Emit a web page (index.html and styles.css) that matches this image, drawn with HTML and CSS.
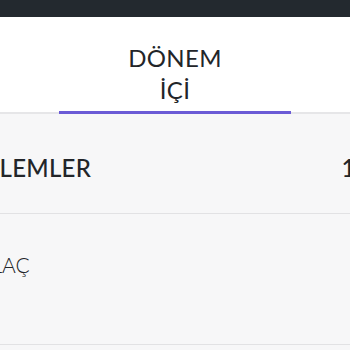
FILE: index.html
```html
<!DOCTYPE html>
<html lang="tr">
<head>
<meta charset="utf-8">
<title>Dönem İçi</title>
<link rel="stylesheet" href="styles.css">
</head>
<body>
<div class="topbar"></div>
<nav class="tabs">
  <div class="tab"></div>
  <div class="tab tab-active"><span class="tab-label">DÖNEM<br>İÇİ</span></div>
  <div class="tab"></div>
</nav>
<main class="list">
  <div class="row row-head">
    <span class="row-title">İŞLEMLER</span>
    <span class="row-value">12</span>
  </div>
  <div class="row row-item">
    <span class="row-name">İLAÇ</span>
  </div>
</main>
</body>
</html>
```

FILE: styles.css
```css
html, body {
  margin: 0;
  padding: 0;
  background: #f7f7f8;
  font-family: Lato, "Noto Sans", sans-serif;
  color: #222529;
  overflow: hidden;
}

.topbar {
  height: 17px;
  background: #23292f;
}

.tabs {
  display: flex;
  justify-content: center;
  background: #ffffff;
  box-shadow: inset 0 -2px 0 #e6e6e8;
  overflow: hidden;
}

.tab {
  flex: 0 0 232px;
  text-align: center;
  padding: 25px 0 5px;
  border-bottom: 3px solid transparent;
}

.tab-active {
  border-bottom-color: #6b5bd6;
}

.tab-label {
  display: inline-block;
  font-size: 24px;
  line-height: 32px;
  font-weight: 400;
  letter-spacing: 0.3px;
}

.list {
  margin: 0 -20px 0 -21px;
}

.row {
  display: flex;
  justify-content: space-between;
  align-items: flex-start;
  border-bottom: 1px solid #e2e2e4;
}

.row-head {
  padding: 39px 0 31px;
  font-size: 24px;
  font-weight: 500;
  letter-spacing: 0.3px;
}

.row-item {
  padding: 38px 0 67px 7px;
  font-size: 21px;
  font-weight: 300;
}
```
